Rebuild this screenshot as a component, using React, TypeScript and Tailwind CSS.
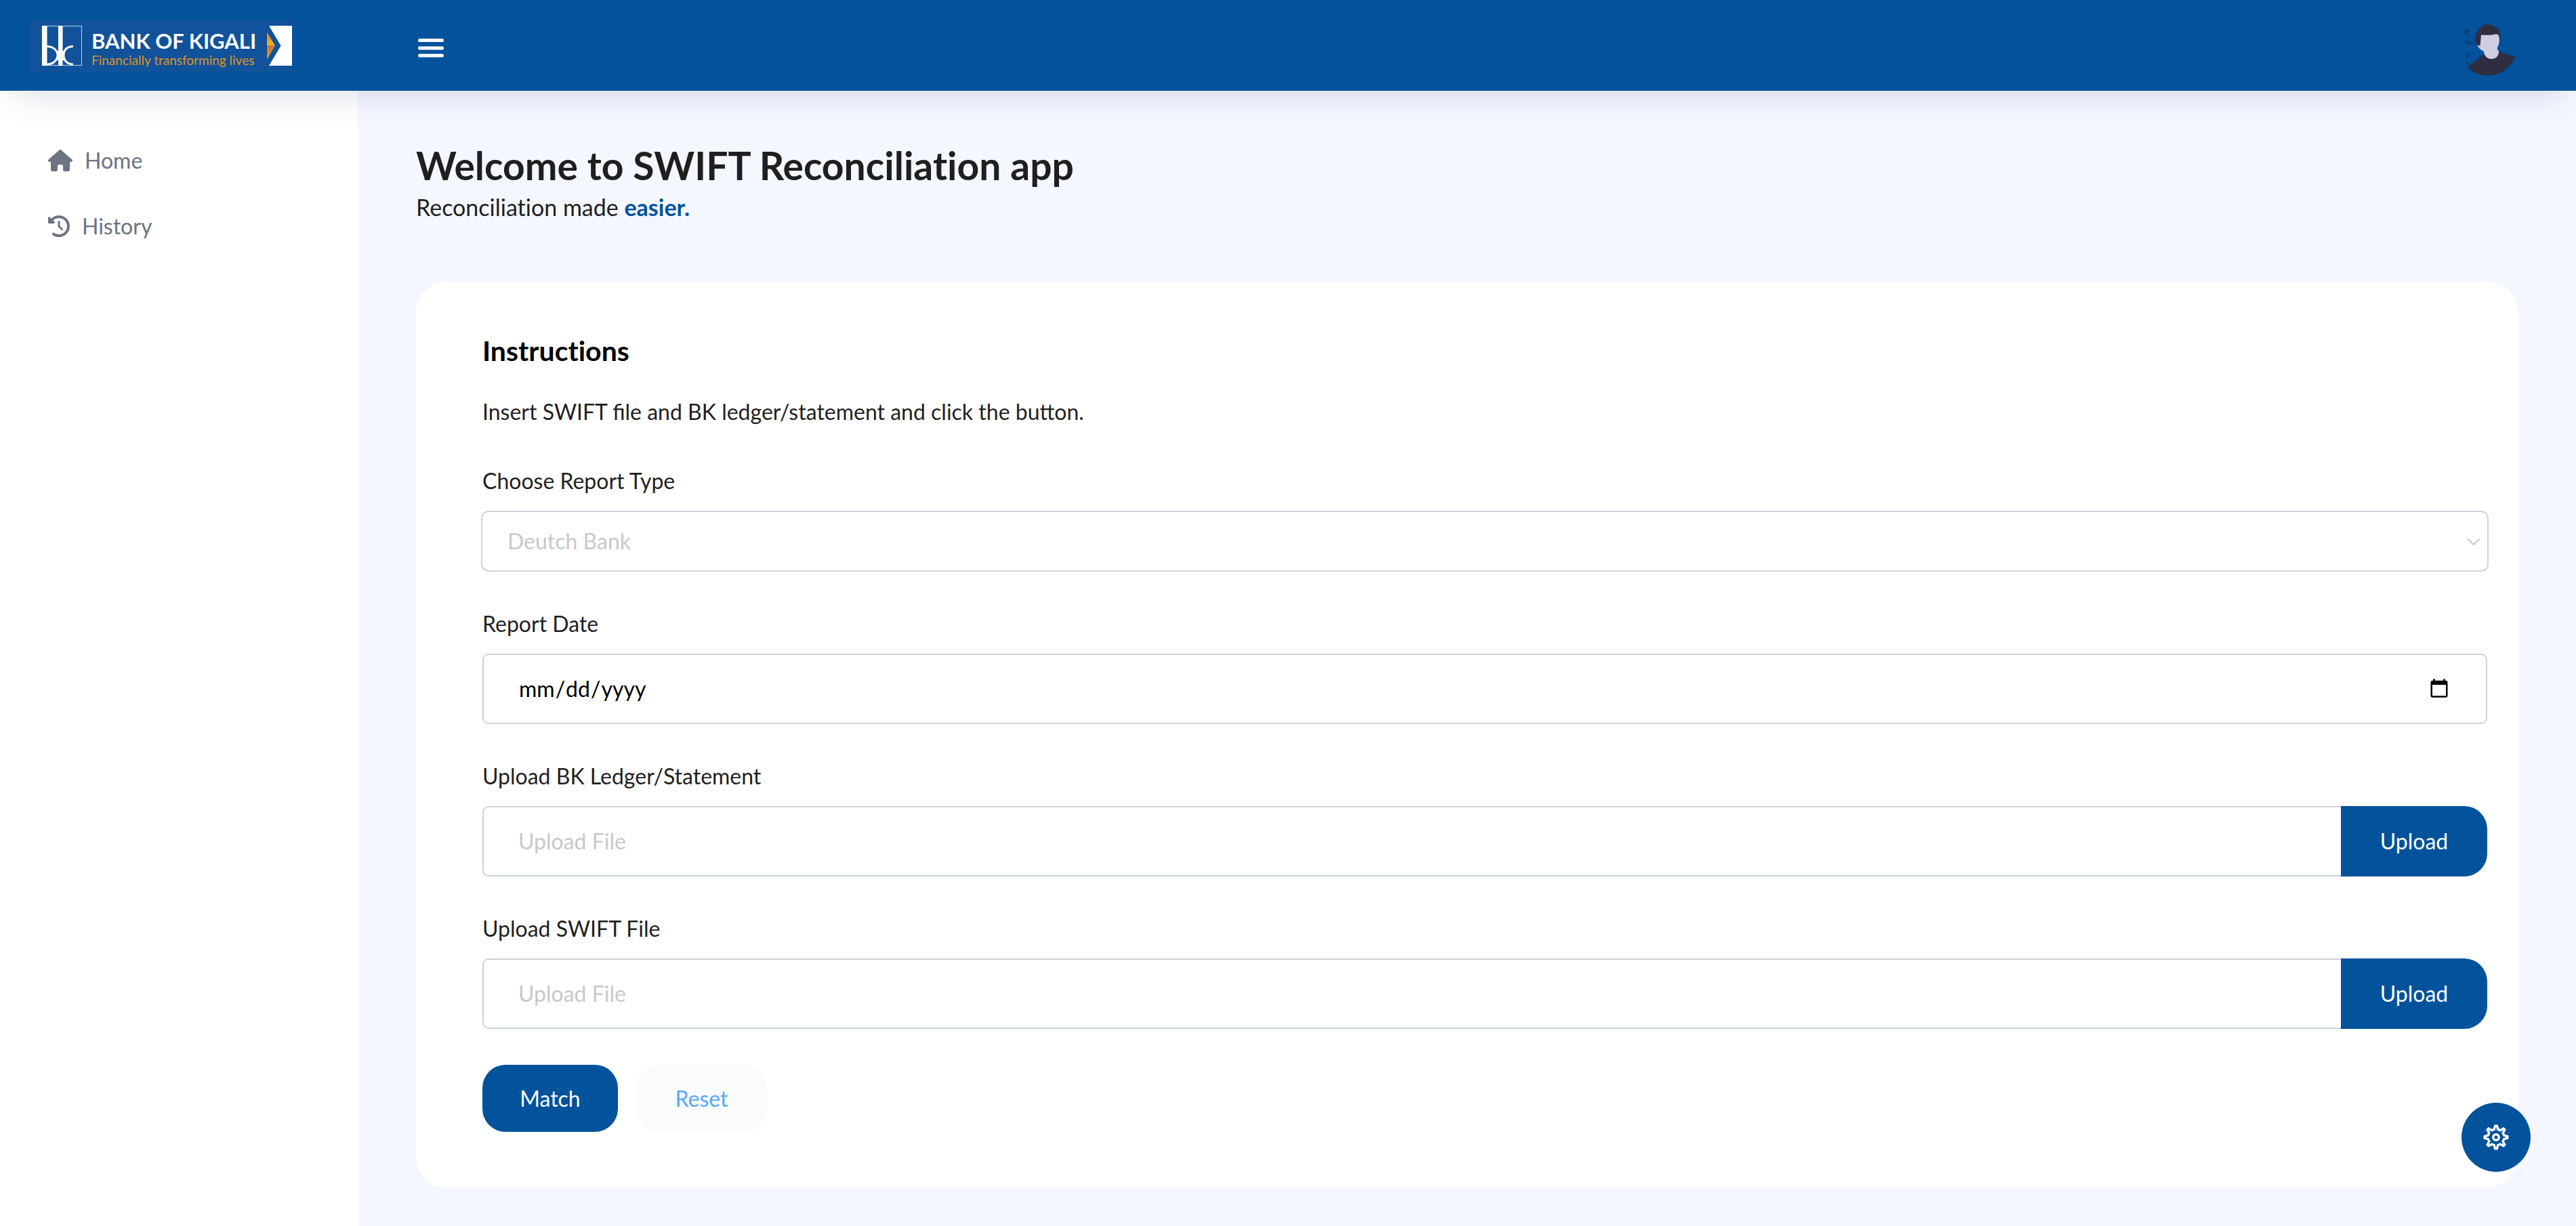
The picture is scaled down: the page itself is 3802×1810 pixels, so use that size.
import { useState } from "react";
import type { ReactNode } from "react";
import { FaHouse, FaClockRotateLeft } from "react-icons/fa6";
import { TfiSettings } from "react-icons/tfi";

function BankLogo() {
  return (
    <svg width="387" height="77" viewBox="0 0 387 77" role="img" aria-label="Bank of Kigali, financially transforming lives">
      <defs>
        <linearGradient id="arrowTop" x1="0" y1="0" x2="0" y2="1">
          <stop offset="0" stopColor="#cf7f2c" />
          <stop offset="1" stopColor="#f7b71b" />
        </linearGradient>
        <linearGradient id="arrowBottom" x1="0" y1="0" x2="0" y2="1">
          <stop offset="0" stopColor="#cb7432" />
          <stop offset="1" stopColor="#e3a023" />
        </linearGradient>
      </defs>
      <rect width="387" height="77" fill="#11529a" />
      <rect x="18.5" y="9.500" width="58" height="58" fill="none" stroke="#a9c3e3" strokeWidth="1.200" />
      <rect x="18" y="9" width="7.500" height="59" fill="#fff" />
      <rect x="42" y="9" width="6.500" height="59" fill="#fff" />
      <path d="M25 39.500C34 39.500 41 45 41 52.500S34 66 25 66" fill="none" stroke="#fff" strokeWidth="3" />
      <path d="M64 39.500C55 39.500 50 45 50 52.500S55 66 64 66" fill="none" stroke="#fff" strokeWidth="3" />
      <path d="M39 46Q43 52.500 39 60H52Q48 52.500 52 46Z" fill="#fff" />
      <text x="91" y="43" fontFamily="'Lato',sans-serif" fontSize="31" fontWeight="700" fill="#fff">BANK OF KIGALI</text>
      <text x="91" y="67" fontFamily="'Lato',sans-serif" fontSize="19" fill="#dd9526">Financially transforming lives</text>
      <path d="M350 18L362 38.500H350Z" fill="url(#arrowTop)" />
      <path d="M350 38.500H362L350 59Z" fill="url(#arrowBottom)" />
      <path d="M353 9H387V68H353L370.500 38.500Z" fill="#fff" />
    </svg>
  );
}

function Avatar() {
  return (
    <svg width="90" height="90" viewBox="0 0 90 90" aria-hidden="true">
      <g fill="#02457f">
        <circle cx="15.500" cy="25" r="4" />
        <circle cx="17" cy="59.500" r="4" />
        <path d="M11 38Q20 36 27 43.500Q16 46 11 38Z" />
        <path d="M12 70Q19 68 24 73.500Q17 76 12 70Z" />
      </g>
      <path d="M20 29Q33 40 35.500 62M21 64Q24 67 25 70" fill="none" stroke="#02457f" strokeWidth="1" />
      <path d="M17 77.500L41 58L63 54L88 62C80 79 65 89.500 47 89.500C34 89.500 24 85 17 77.500Z" fill="#2f2e41" />
      <path d="M31 44L36 28L62 27C65 35 64 43 61 48C60 50 62 52 63 54C63 61 59 65 52 65C45 65 41 59 41 54C37 52 33 49 31 44Z" fill="#d0cde1" />
      <path d="M31.500 45C27 40 27 29 32 24C36 17 41 13 46 13.500C54 15 62 19 65 24L65 37C64 30 62 28 58 28.500C52 30.500 45 29.500 37 29.500L35.500 46L33 44.500Z" fill="#2f2e41" />
    </svg>
  );
}

function NavLink({ icon, children }: { icon: ReactNode; children: ReactNode }) {
  return (
    <a href="#" className="flex h-[97px] items-center gap-[18px] text-[#6c7383]">
      {icon}
      <span>{children}</span>
    </a>
  );
}

function FileField({ id, label }: { id: string; label: string }) {
  return (
    <div className="flex flex-col gap-[20px]">
      <label htmlFor={id}>{label}</label>
      <div className="flex h-[104px]">
        <input
          id={id}
          type="text"
          placeholder="Upload File"
          readOnly
          className="min-w-0 flex-1 rounded-l-[9px] border-2 border-r-0 border-[#ced4da] bg-white px-[51px] outline-none placeholder:text-[#c9c8c8] placeholder:opacity-100"
        />
        <button type="button" className="w-[216px] rounded-r-[34px] bg-[#02529c] text-white">
          Upload
        </button>
      </div>
    </div>
  );
}

export default function App() {
  const [menuOpen, setMenuOpen] = useState(true);
  return (
    <div className="flex min-h-screen flex-col bg-[#f4f7ff] font-['Lato','Noto_Sans',sans-serif] text-[32px] leading-[48px] text-[#1f1f1f]">
      <header className="relative z-10 flex h-[134px] items-center bg-[#02529c] pr-[87px] shadow-[0_26px_48px_-20px_rgba(50,50,110,0.16)]">
        <a href="#" className="flex w-[528px] pl-[44px]">
          <BankLogo />
        </a>
        <button type="button" aria-label="Toggle menu" onClick={() => setMenuOpen(!menuOpen)} className="ml-[86px]">
          <svg width="44" height="44" viewBox="0 0 44 44" fill="none" stroke="#fff" strokeWidth="5" strokeLinecap="round" aria-hidden="true">
            <path d="M5.500 14.500H38.500M5.500 26H38.500M5.500 37H38.500" />
          </svg>
        </button>
        <button type="button" aria-label="Profile" className="ml-auto">
          <Avatar />
        </button>
      </header>

      <div className="flex flex-1">
        {menuOpen && (
          <nav className="w-[528px] shrink-0 bg-white pt-[54px] pl-[71px]">
            <NavLink icon={<FaHouse className="h-[32px] w-[36px]" />}>Home</NavLink>
            <NavLink icon={<FaClockRotateLeft className="h-[32px] w-[32px]" />}>History</NavLink>
          </nav>
        )}

        <main className="flex-1 px-[86px] pt-[76px] pb-[55px]">
          <h1 className="text-[57px] leading-[68px] font-bold [font-variant-ligatures:none]">Welcome to SWIFT Reconciliation app</h1>
          <p className="mt-1 text-[34px] [font-variant-ligatures:none]">
            Reconciliation made <a href="#" className="font-bold text-[#02529c]">easier.</a>
          </p>

          <section className="mt-[86px] rounded-[45px] bg-white pt-[74px] pr-[45px] pb-[82px] pl-[98px]">
            <h2 className="text-[41px] leading-[56px] font-bold text-black [font-variant-ligatures:none]">Instructions</h2>
            <p className="mt-[38px]">Insert SWIFT file and BK ledger/statement and click the button.</p>

            <form className="mt-[54px] flex flex-col gap-[53px]" onSubmit={(e) => e.preventDefault()}>
              <div className="flex flex-col gap-[20px]">
                <label htmlFor="report-type">Choose Report Type</label>
                <div className="relative -mx-[2px]">
                  <select
                    id="report-type"
                    className="block h-[90px] w-full appearance-none rounded-[11px] border-2 border-[#ced4da] bg-white px-[37px] text-[#c9c8c8] outline-none"
                  >
                    <option>Deutch Bank</option>
                  </select>
                  <svg className="pointer-events-none absolute top-[40px] right-[12px]" width="20" height="12" viewBox="0 0 20 12" fill="none" stroke="#c9c8c8" strokeWidth="2" aria-hidden="true">
                    <path d="M1 1.500L10 10L19 1.500" />
                  </svg>
                </div>
              </div>

              <div className="flex flex-col gap-[20px]">
                <label htmlFor="report-date">Report Date</label>
                <input
                  id="report-date"
                  type="date"
                  className="h-[104px] rounded-[9px] border-2 border-[#ced4da] bg-white px-[51px] text-black outline-none"
                />
              </div>

              <FileField id="ledger-file" label="Upload BK Ledger/Statement" />
              <FileField id="swift-file" label="Upload SWIFT File" />

              <div className="flex gap-[27px]">
                <button type="submit" className="h-[99px] w-[200px] rounded-[34px] bg-[#02529c] text-white">
                  Match
                </button>
                <button type="reset" className="h-[99px] w-[193px] rounded-[34px] bg-[#f9fbfd] text-[#58a8ff]">
                  Reset
                </button>
              </div>
            </form>
          </section>
        </main>
      </div>

      <button
        type="button"
        aria-label="Settings"
        className="fixed right-[67px] bottom-[80px] flex size-[102px] items-center justify-center rounded-full bg-[#02529c] text-white"
      >
        <TfiSettings className="size-[36px] overflow-visible stroke-current stroke-[0.6px]" />
      </button>
    </div>
  );
}
